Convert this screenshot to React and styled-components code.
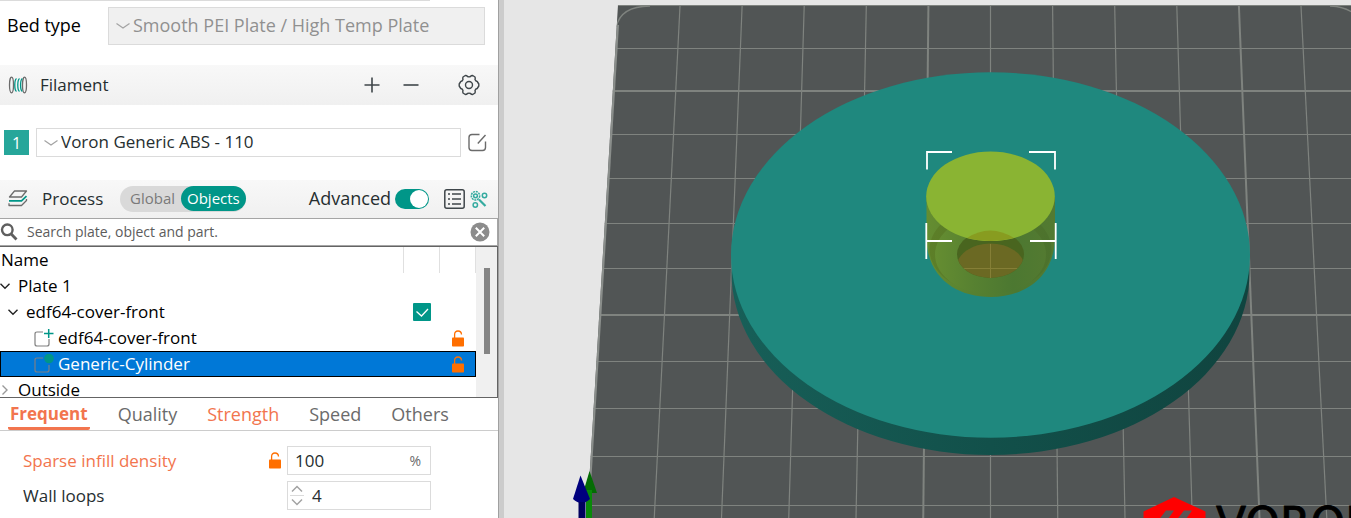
import React, { useState } from 'react';
import styled, { createGlobalStyle, css } from 'styled-components';

const TABS = [
  { name: 'Frequent', changed: true },
  { name: 'Quality' },
  { name: 'Strength', changed: true },
  { name: 'Speed' },
  { name: 'Others' },
];

const ROWS = [
  { name: 'Plate 1', level: 0, arrow: 'down' },
  { name: 'edf64-cover-front', level: 1, arrow: 'down', printable: true },
  { name: 'edf64-cover-front', level: 2, icon: 'part', locked: true },
  { name: 'Generic-Cylinder', level: 2, icon: 'modifier', locked: true },
  { name: 'Outside', level: 0, arrow: 'right' },
];

const Chevron = () => (
  <svg width="14" height="8" viewBox="0 0 14 8" fill="none" stroke="#a3a3a3" strokeWidth="1.2">
    <path d="M.5 1.5 7 6l6.500-4.500" />
  </svg>
);

const SpoolIcon = () => (
  <svg width="20" height="20" viewBox="0 0 20 20" fill="none" strokeWidth="1.300">
    <ellipse cx="3.500" cy="10" rx="2" ry="7.800" stroke="#6b6b6b" />
    <ellipse cx="16.500" cy="10" rx="2" ry="7.800" stroke="#6b6b6b" />
    <path
      d="M8.500 3.500C6.200 5 6.200 15 8.500 16.500M11.500 3.500C9.200 5 9.200 15 11.500 16.500M14.300 3.500C12 5 12 15 14.300 16.500"
      stroke="#009688"
    />
  </svg>
);

const LayersIcon = () => (
  <svg width="20" height="18" viewBox="0 0 20 18" fill="none" strokeWidth="1.300" strokeLinejoin="round">
    <path d="M6.500 1H18.500L13.500 7H1.500Z" stroke="#6b6b6b" />
    <path d="M1 10.800H13.500L18.500 6.200" stroke="#009688" strokeWidth="1.700" />
    <path d="M1 13.200V15.500H13.500L18.500 10.500V9" stroke="#6b6b6b" />
  </svg>
);

const GearIcon = () => (
  <svg width="22" height="22" viewBox="0 0 22 22" fill="none" stroke="#3f464a" strokeWidth="1.400" strokeLinejoin="round">
    <path d="M7.300 1.500Q9 1.500 9.500 2.500Q11 3.200 12.500 2.500Q13 1.500 14.700 1.500L17 3Q17.500 4.300 17 5.500Q17.700 7.300 19.200 7.500L20.800 10V12L19.200 14.500Q17.500 14.800 17 16.500Q17.500 17.800 17 19L14.700 20.500Q13.200 20.500 12.500 19.500Q11 18.800 9.500 19.500Q8.800 20.500 7.300 20.500L5 19Q4.500 17.800 5 16.500Q4.500 14.800 2.800 14.500L1.200 12V10L2.800 7.500Q4.400 7.200 5 5.500Q4.500 4.300 5 3Z" />
    <circle cx="11" cy="11" r="3.500" />
  </svg>
);

const PlusIcon = () => (
  <svg width="20" height="20" viewBox="0 0 20 20" stroke="#3f464a" strokeWidth="1.600">
    <path d="M2.500 10h15M10 2.500v15" />
  </svg>
);

const MinusIcon = () => (
  <svg width="20" height="20" viewBox="0 0 20 20" stroke="#3f464a" strokeWidth="1.600">
    <path d="M2.500 10h15" />
  </svg>
);

const EditIcon = () => (
  <svg width="19" height="19" viewBox="0 0 19 19" fill="none" stroke="#6b6b6b" strokeWidth="1.400">
    <path d="M11.500 1.500H4Q1 1.500 1 4.500V14.500Q1 17.500 4 17.500H14.500Q17.500 17.500 17.500 14.500V8.500M9.800 10.500 17.500 2" />
  </svg>
);

const ListIcon = () => (
  <svg width="21" height="20" viewBox="0 0 21 20" fill="none" stroke="#3f464a" strokeWidth="1.500">
    <rect x=".8" y=".8" width="19.400" height="18.400" rx="2" />
    <path d="M4 5h2M8 5h9M4 10h2M8 10h9M4 15h2M8 15h9" />
  </svg>
);

const WandIcon = () => (
  <svg width="18" height="19" viewBox="0 0 18 19" fill="none" stroke="#35aba0" strokeWidth="1.500">
    <circle cx="5.500" cy="5.800" r="4.200" strokeDasharray="2 .8" />
    <circle cx="5.500" cy="5.800" r="1.900" />
    <circle cx="14.500" cy="5.500" r="2.200" />
    <circle cx="5.300" cy="15" r="2.200" />
    <path d="M9 9.500 15.500 16" strokeWidth="2.200" />
  </svg>
);

const SearchIcon = () => (
  <svg width="18" height="18" viewBox="0 0 18 18" fill="none" stroke="#5f5f5f" strokeWidth="2.400">
    <circle cx="7.300" cy="6.800" r="5.300" />
    <path d="M11 10.800 16.500 16.500" strokeWidth="2.800" />
  </svg>
);

const ClearIcon = () => (
  <svg width="20" height="20" viewBox="0 0 20 20">
    <circle cx="10" cy="10" r="9.500" fill="#8c8c8c" />
    <path d="m5.800 5.800 8.400 8.400m0-8.400-8.400 8.400" stroke="#fff" strokeWidth="2" />
  </svg>
);

const LockIcon = () => (
  <svg width="12" height="17" viewBox="0 0 12 17">
    <path d="M2.600 8V4.500Q2.600 1 6 1Q9.300 1 9.500 4.500" fill="none" stroke="#ff6f00" strokeWidth="1.300" />
    <rect y="7.500" width="12" height="9" rx=".8" fill="#ff6f00" />
  </svg>
);

const PartIcon = ({ type }) => (
  <svg width="20" height="20" viewBox="0 0 20 20" fill="none">
    <path
      d="M9 4H3Q1 4 1 6V16Q1 18 3 18H13Q15 18 15 16V11"
      stroke={type === 'modifier' ? '#7b7f86' : '#808080'}
      strokeWidth="1.200"
    />
    {type === 'modifier' ? (
      <circle cx="15" cy="4.500" r="4.800" fill="#009688" />
    ) : (
      <path d="M10 5.500h9.500M14.700 1v9" stroke="#009688" strokeWidth="1.500" />
    )}
  </svg>
);

const Arrow = ({ dir }) => (
  <svg width="10" height="10" viewBox="0 0 10 10" fill="none" stroke={dir === 'down' ? '#222' : '#999'} strokeWidth="1.400">
    <path d={dir === 'down' ? 'M.5 2.800 5 7.300 9.500 2.800' : 'M2.500.5 7 5 2.500 9.500'} />
  </svg>
);

const Scene = () => {
  const cols = [-5, -4, -3, -2, -1, 0, 1, 2, 3, 4, 5];
  const rows = [5.5, 48.5, 91, 134.5, 178.500, 223.500, 268.500, 315, 361.500, 408.500, 456.500, 505.500];
  return (
    <SceneSvg viewBox="504 0 847 518" preserveAspectRatio="xMinYMin slice" role="img" aria-label="Build plate">
      <defs>
        <linearGradient id="rim">
          <stop offset="0" stopColor="#175f58" />
          <stop offset=".5" stopColor="#12504a" />
          <stop offset="1" stopColor="#10443f" />
        </linearGradient>
        <linearGradient id="tube">
          <stop offset="0" stopColor="#658d31" />
          <stop offset=".35" stopColor="#578131" />
          <stop offset=".7" stopColor="#4c7831" />
          <stop offset="1" stopColor="#537a31" />
        </linearGradient>
        <linearGradient id="ring">
          <stop offset="0" stopColor="#5d7f28" />
          <stop offset="1" stopColor="#4c722d" />
        </linearGradient>
        <clipPath id="plate">
          <path d="M618 5H1363L1394 518H587Z" />
        </clipPath>
        <clipPath id="hole">
          <ellipse cx="990.5" cy="254.3" rx="33.5" ry="23.600" />
        </clipPath>
      </defs>
      <path d="M618 5H1363L1394 518H587Z" fill="#515555" />
      <g clipPath="url(#plate)" stroke="#7f837f">
        {rows.map((y, i) => (
          <path key={y} d={`M580 ${y}H1400`} strokeWidth={i === 2 || i === 7 ? 2 : 1.2} />
        ))}
        {cols.map((k) => (
          <path
            key={k}
            d={`M${990.5 + k * 62.1} 6L${990.5 + k * 67.25} 518`}
            strokeWidth={k === -1 || k === 4 ? 2 : 1.2}
          />
        ))}
        <path d="M617 25L587 518" strokeWidth="4" stroke="#8a8e8b" />
        <path d="M616.500 27Q620 6.500 650 6M1330 6Q1350 7 1358 18" fill="none" strokeWidth="1.300" />
      </g>

      <ellipse cx="990.5" cy="272.5" rx="259" ry="182.500" fill="url(#rim)" />
      <ellipse cx="990.5" cy="255" rx="259.500" ry="182.700" fill="#1f887e" />

      <path d="M926.500 196V238C927 278 957 297 990.500 297S1054 278 1055 238V196Z" fill="url(#tube)" />
      <ellipse cx="990.5" cy="249.500" rx="61" ry="43" fill="url(#ring)" />
      <ellipse cx="990.5" cy="254.500" rx="55.500" ry="39.500" fill="url(#tube)" />
      <ellipse cx="990.5" cy="254.3" rx="33.500" ry="23.600" fill="#49651f" />
      <g clipPath="url(#hole)">
        <ellipse cx="990.5" cy="267.500" rx="34" ry="24" fill="#6b6923" />
        <path d="M990.500 244V280M950 268.500H1030" stroke="#857f36" />
      </g>
      <ellipse cx="990.5" cy="196.300" rx="64.300" ry="44.800" fill="#8ab433" />
      <path d="M967 238Q990 223 1014 238Q990 244 967 238Z" fill="#889c20" />
      <path
        d="M952 152H927V169.500M1029 152H1055V169.500M926.300 223V259M927 241H952M1055.700 223V259M1030 241H1055"
        fill="none"
        stroke="#fff"
        strokeWidth="1.800"
      />

      <path d="M589.500 471 597 493H583Z" fill="#046c04" />
      <path d="M586 490H592V518H586Z" fill="#098a09" />
      <path d="M580.500 475.500 590 499Q581.500 507 573 499Z" fill="#00007e" />
      <path d="M578.500 502H585.500V518H578.500Z" fill="#00005e" />

      <path d="M1174 497 1205.500 511.500V530H1143.500V511.500Z" fill="#f00" />
      <path d="M1166 510.500H1174L1166 522H1157ZM1184 510.500H1192L1184 522H1175Z" fill="#5c5656" />
      <text x="1216" y="539" fontFamily="DejaVu Sans, sans-serif" fontSize="44" stroke="#000" strokeWidth=".8">
        VORON
      </text>
    </SceneSvg>
  );
};

const App = () => {
  const [tab, setTab] = useState('Frequent');
  const [scope, setScope] = useState('Objects');

  return (
    <Page>
      <GlobalStyle />
      <Sidebar>
        <PanelEdge />
        <BedRow>
          <BedLabel htmlFor="bed">Bed type</BedLabel>
          <SelectBox $disabled>
            <Chevron />
            <Select id="bed" disabled>
              <option>Smooth PEI Plate / High Temp Plate</option>
            </Select>
          </SelectBox>
        </BedRow>

        <Header $height={40}>
          <SpoolIcon />
          <HeaderTitle>Filament</HeaderTitle>
          <Tools>
            <IconButton aria-label="Add filament"><PlusIcon /></IconButton>
            <IconButton aria-label="Remove filament"><MinusIcon /></IconButton>
            <IconButton aria-label="Filament settings" $apart><GearIcon /></IconButton>
          </Tools>
        </Header>

        <FilamentRow>
          <Slot>1</Slot>
          <SelectBox>
            <Chevron />
            <Select aria-label="Filament 1">
              <option>Voron Generic ABS - 110</option>
            </Select>
          </SelectBox>
          <IconButton aria-label="Edit filament"><EditIcon /></IconButton>
        </FilamentRow>

        <Header $height={38}>
          <LayersIcon />
          <HeaderTitle $wide>Process</HeaderTitle>
          <Segmented>
            {['Global', 'Objects'].map((s) => (
              <Segment key={s} $active={scope === s} onClick={() => setScope(s)}>{s}</Segment>
            ))}
          </Segmented>
          <AdvancedLabel>
            <AdvancedText>Advanced</AdvancedText>
            <Toggle type="checkbox" role="switch" defaultChecked />
          </AdvancedLabel>
          <IconPair>
            <IconButton aria-label="Parameter list"><ListIcon /></IconButton>
            <IconButton aria-label="Tune"><WandIcon /></IconButton>
          </IconPair>
        </Header>

        <SearchBar>
          <SearchIcon />
          <SearchInput aria-label="Search" placeholder="Search plate, object and part." />
          <IconButton aria-label="Clear search"><ClearIcon /></IconButton>
        </SearchBar>

        <TreePanel>
          <Tree>
            <thead>
              <tr>
                <th>Name</th>
                <th aria-label="Printable" />
                <th aria-label="Modified" />
              </tr>
            </thead>
            <tbody>
              {ROWS.map((row, i) => (
                <TreeRow key={i} $selected={row.icon === 'modifier'}>
                  <td>
                    <NameCell $level={row.level}>
                      {row.arrow && <Arrow dir={row.arrow} />}
                      {row.icon && <PartIcon type={row.icon} />}
                      {row.name}
                    </NameCell>
                  </td>
                  <td>
                    {row.printable && (
                      <Check>
                        <input type="checkbox" defaultChecked aria-label="Printable" />
                        <svg width="18" height="18" viewBox="0 0 18 18" fill="none" stroke="#fff" strokeWidth="1.300">
                          <path d="m3.500 8.500 5 4.500 6.500-7" />
                        </svg>
                      </Check>
                    )}
                  </td>
                  <td>{row.locked && <LockIcon />}</td>
                </TreeRow>
              ))}
            </tbody>
          </Tree>
          <ScrollTrack>
            <ScrollThumb />
          </ScrollTrack>
        </TreePanel>

        <TabBar role="tablist">
          {TABS.map((t) => (
            <Tab
              key={t.name}
              role="tab"
              aria-selected={tab === t.name}
              $active={tab === t.name}
              $changed={t.changed}
              onClick={() => setTab(t.name)}
            >
              {t.name}
            </Tab>
          ))}
        </TabBar>

        <Params>
          <ParamLabel htmlFor="density" $changed>Sparse infill density</ParamLabel>
          <LockIcon />
          <Field>
            <FieldInput id="density" defaultValue="100" />
            <Unit>%</Unit>
          </Field>
          <ParamLabel htmlFor="loops">Wall loops</ParamLabel>
          <span />
          <Field $spin>
            <Spinner>
              <SpinButton aria-label="Increase">
                <svg width="12" height="8" viewBox="0 0 12 8" fill="none" stroke="#a3a3a3" strokeWidth="1.500">
                  <path d="m1 6.500 5-5 5 5" />
                </svg>
              </SpinButton>
              <SpinButton aria-label="Decrease">
                <svg width="12" height="8" viewBox="0 0 12 8" fill="none" stroke="#a3a3a3" strokeWidth="1.500">
                  <path d="m1 1.500 5 5 5-5" />
                </svg>
              </SpinButton>
            </Spinner>
            <FieldInput id="loops" defaultValue="4" />
          </Field>
        </Params>
      </Sidebar>
      <Splitter />
      <Viewport>
        <Scene />
      </Viewport>
    </Page>
  );
};

export default App;

const GlobalStyle = createGlobalStyle`
  * {
    box-sizing: border-box;
  }

  body {
    margin: 0;
    background: #fff;
    color: #262e30;
    font-family: 'Open Sans', 'Noto Sans', sans-serif;
    font-size: 17px;
  }

  button, input, select {
    font: inherit;
    color: inherit;
  }

  svg {
    display: block;
    flex-shrink: 0;
  }
`;

const Page = styled.div`
  display: flex;
  height: 100vh;
  overflow: hidden;
`;

const Sidebar = styled.aside`
  flex: 0 0 498px;
  background: #fff;
`;

const Splitter = styled.div`
  flex: 0 0 6px;
  background: #ccc;
  border-left: 1px solid #a0a0a0;
`;

const Viewport = styled.main`
  flex: 1;
  min-width: 0;
  background: #e6e6e6;
`;

const SceneSvg = styled.svg`
  width: 100%;
  height: 100%;
`;

const PanelEdge = styled.div`
  width: 430px;
  height: 1px;
  background: #dbdbdb;
`;

const BedRow = styled.div`
  display: flex;
  align-items: center;
  padding: 6px 13px 20px 7px;
`;

const BedLabel = styled.label`
  width: 101px;
  padding-bottom: 2px;
  font-size: 18px;
  color: #000;
`;

const SelectBox = styled.div`
  flex: 1;
  display: flex;
  align-items: center;
  gap: 3px;
  height: ${({ $disabled }) => ($disabled ? 38 : 29)}px;
  padding-left: 7px;
  border: 1px solid #dbdbdb;
  background: ${({ $disabled }) => ($disabled ? '#f0f0f0' : '#fff')};
  color: ${({ $disabled }) => ($disabled ? '#909090' : '#262e30')};
  font-size: ${({ $disabled }) => ($disabled ? 18 : 17)}px;
`;

const Select = styled.select`
  flex: 1;
  appearance: none;
  padding: 0 0 2px;
  border: 0;
  outline: 0;
  background: transparent;

  &:disabled {
    opacity: 1;
  }
`;

const Header = styled.div`
  display: flex;
  align-items: center;
  height: ${({ $height }) => $height}px;
  padding: 0 10px 0 8px;
  background: linear-gradient(#f8f8f8, #f0f0f0);
`;

const HeaderTitle = styled.span`
  margin-left: ${({ $wide }) => ($wide ? 14 : 12)}px;
  padding-bottom: 2px;
  width: 78px;
`;

const Tools = styled.div`
  display: flex;
  align-items: center;
  gap: 19px;
  margin-left: auto;
  padding-right: 8px;
`;

const IconButton = styled.button`
  padding: 0;
  border: 0;
  background: none;
  cursor: pointer;
  ${({ $apart }) => $apart && css`margin-left: 18px;`}
`;

const FilamentRow = styled.div`
  display: flex;
  align-items: center;
  gap: 7px;
  padding: 23px 11px 23px 4px;
`;

const Slot = styled.button`
  width: 25px;
  height: 25px;
  padding: 0;
  border: 0;
  background: #26a69a;
  color: #fff;
  font-size: 16px;
  line-height: 24px;
`;

const Segmented = styled.div`
  display: flex;
  height: 26px;
  border-radius: 13px;
  background: #d9d9d9;
`;

const Segment = styled.button`
  height: 25px;
  padding: 0 6px 2px 10px;
  border: 0;
  border-radius: 13px;
  background: none;
  color: #7a7a7a;
  font-size: 15px;
  ${({ $active }) => $active && css`
    padding: 0 6px 2px;
    background: #009688;
    color: #fff;
  `}
`;

const AdvancedLabel = styled.label`
  display: flex;
  align-items: center;
  gap: 4px;
  margin-left: auto;
`;

const AdvancedText = styled.span`
  padding-bottom: 2px;
  font-size: 18px;
`;

const Toggle = styled.input`
  appearance: none;
  width: 34px;
  height: 20px;
  margin: 0;
  padding: 1px;
  border-radius: 10px;
  background: #bbb;

  &::before {
    content: '';
    display: block;
    width: 18px;
    height: 18px;
    border-radius: 50%;
    background: #fff;
  }

  &:checked {
    background: #009688;
  }

  &:checked::before {
    margin-left: auto;
  }
`;

const IconPair = styled.div`
  display: flex;
  gap: 5px;
  margin-left: 15px;
`;

const SearchBar = styled.div`
  display: flex;
  align-items: center;
  gap: 9px;
  height: 28px;
  padding-right: 7px;
  border: 1px solid #a5a5a5;
  border-left: 0;
`;

const SearchInput = styled.input`
  flex: 1;
  padding: 0 0 2px;
  border: 0;
  outline: 0;
  font-size: 14px;

  &::placeholder {
    color: #5c5c5c;
  }
`;

const TreePanel = styled.div`
  display: flex;
  height: 152px;
  overflow: hidden;
  border: 1px solid #646464;
  border-left: 0;
`;

const Tree = styled.table`
  flex: 1;
  align-self: flex-start;
  table-layout: fixed;
  border-collapse: collapse;
  font-size: 17px;
  line-height: 20px;
  color: #000;

  th {
    height: 26px;
    padding: 0 0 0 1px;
    border-right: 1px solid #e0e0e0;
    font-weight: normal;
    text-align: left;
  }

  th + th {
    width: 36px;
  }

  td {
    height: 26px;
    padding: 0;
  }

  td + td > * {
    margin: 0 auto;
  }
`;

const TreeRow = styled.tr`
  ${({ $selected }) => $selected && css`
    background: #0078d7;
    color: #fff;
    outline: 1px solid #000;
    outline-offset: -1px;
  `}
`;

const NameCell = styled.div`
  display: flex;
  align-items: center;
  gap: ${({ $level }) => ($level === 2 ? 4 : 8)}px;
  padding-left: ${({ $level }) => [0, 8, 34][$level]}px;
`;

const Check = styled.label`
  display: grid;
  width: 18px;
  height: 18px;

  input, svg {
    grid-area: 1 / 1;
  }

  input {
    appearance: none;
    width: 18px;
    height: 18px;
    margin: 0;
    border-radius: 1px;
    background: #009688;
  }
`;

const ScrollTrack = styled.div`
  width: 21px;
  padding: 21px 7px 0 8px;
  background: #f0f0f0;
`;

const ScrollThumb = styled.div`
  width: 6px;
  height: 86px;
  background: #858585;
`;

const TabBar = styled.div`
  display: flex;
  gap: 26px;
  height: 33px;
  padding-left: 8px;
  border-bottom: 1px solid #ccc;
`;

const Tab = styled.button`
  padding: 2px 2px 0;
  border: 0;
  border-bottom: 3px solid ${({ $active }) => ($active ? '#f2754e' : 'transparent')};
  border-radius: 2px;
  background: none;
  color: ${({ $changed }) => ($changed ? '#f2754e' : '#6b6b6b')};
  font-size: ${({ $active }) => ($active ? 17 : 18)}px;
  font-weight: ${({ $active }) => ($active ? 700 : 400)};
`;

const Params = styled.div`
  display: grid;
  grid-template-columns: 246px 18px 144px;
  align-items: center;
  row-gap: 6px;
  padding: 15px 0 0 23px;
`;

const ParamLabel = styled.label`
  color: ${({ $changed }) => ($changed ? '#f2754e' : '#262e30')};
`;

const Field = styled.div`
  display: flex;
  align-items: center;
  gap: 8px;
  height: 29px;
  padding: ${({ $spin }) => ($spin ? '0 9px 0 2px' : '0 9px 0 7px')};
  border: 1px solid #dbdbdb;
`;

const FieldInput = styled.input`
  flex: 1;
  min-width: 0;
  padding: 0;
  border: 0;
  outline: 0;
`;

const Unit = styled.span`
  font-size: 14px;
  color: #6b6b6b;
`;

const Spinner = styled.div`
  display: flex;
  flex-direction: column;
  width: 14px;
`;

const SpinButton = styled.button`
  padding: 2px 1px;
  border: 0;
  background: none;

  & + & {
    border-top: 1px solid #dbdbdb;
  }
`;
